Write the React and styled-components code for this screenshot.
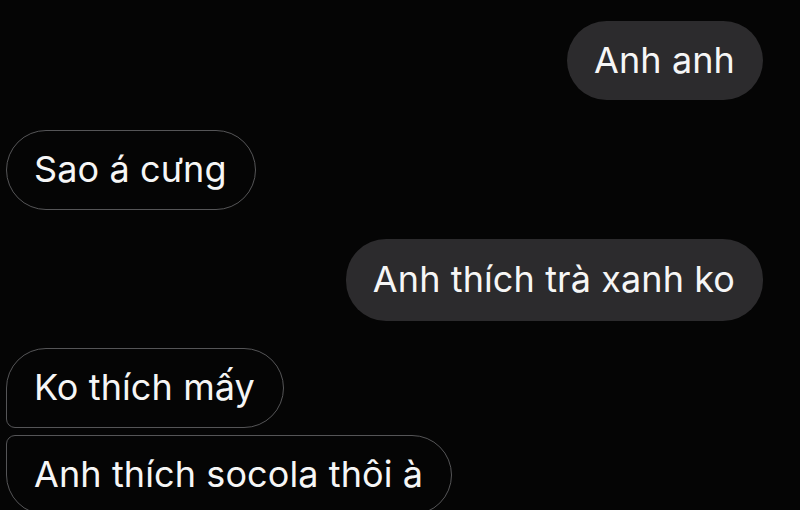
import React from 'react';
import styled, { createGlobalStyle } from 'styled-components';

const GlobalStyle = createGlobalStyle`
  html, body {
    margin: 0;
    padding: 0;
    background: #050505;
    overflow: hidden;
  }
`;

const Thread = styled.div`
  width: 800px;
  height: 510px;
  box-sizing: border-box;
  padding: 0 37px 0 6px;
  display: flex;
  flex-direction: column;
  background: #050505;
  font-family: Inter, 'Noto Sans', sans-serif;
  overflow: hidden;
`;

const Peek = styled.div`
  width: 14px;
  height: 2px;
  margin-left: 27px;
  border-radius: 0 0 2px 2px;
  background: #6a6a6a;
`;

const Bubble = styled.div`
  align-self: ${(p) => (p.$mine ? 'flex-end' : 'flex-start')};
  margin-top: ${(p) => p.$gap}px;
  height: ${(p) => p.$height || 80}px;
  box-sizing: border-box;
  flex-shrink: 0;
  display: flex;
  align-items: center;
  padding: 0 28px 2px 27px;
  border-radius: ${(p) => p.$radius || '40px'};
  background: ${(p) => (p.$mine ? '#2c2b2d' : 'transparent')};
  border: ${(p) => (p.$mine ? 'none' : '1.5px solid #555557')};
  color: #f6f6f6;
  font-size: 36px;
  letter-spacing: 0.1px;
  white-space: nowrap;
`;

const messages = [
  { text: 'Anh anh', mine: true, gap: 21, height: 79 },
  { text: 'Sao á cưng', gap: 30 },
  { text: 'Anh thích trà xanh ko', mine: true, gap: 29, height: 82 },
  { text: 'Ko thích mấy', gap: 27, radius: '40px 40px 40px 9px' },
  { text: 'Anh thích socola thôi à', gap: 7, radius: '9px 40px 40px 40px' },
];

export default function App() {
  return (
    <>
      <GlobalStyle />
      <Thread>
        <Peek />
        {messages.map((m) => (
          <Bubble
            key={m.text}
            $mine={m.mine}
            $gap={m.gap}
            $height={m.height}
            $radius={m.radius}
          >
            {m.text}
          </Bubble>
        ))}
      </Thread>
    </>
  );
}
